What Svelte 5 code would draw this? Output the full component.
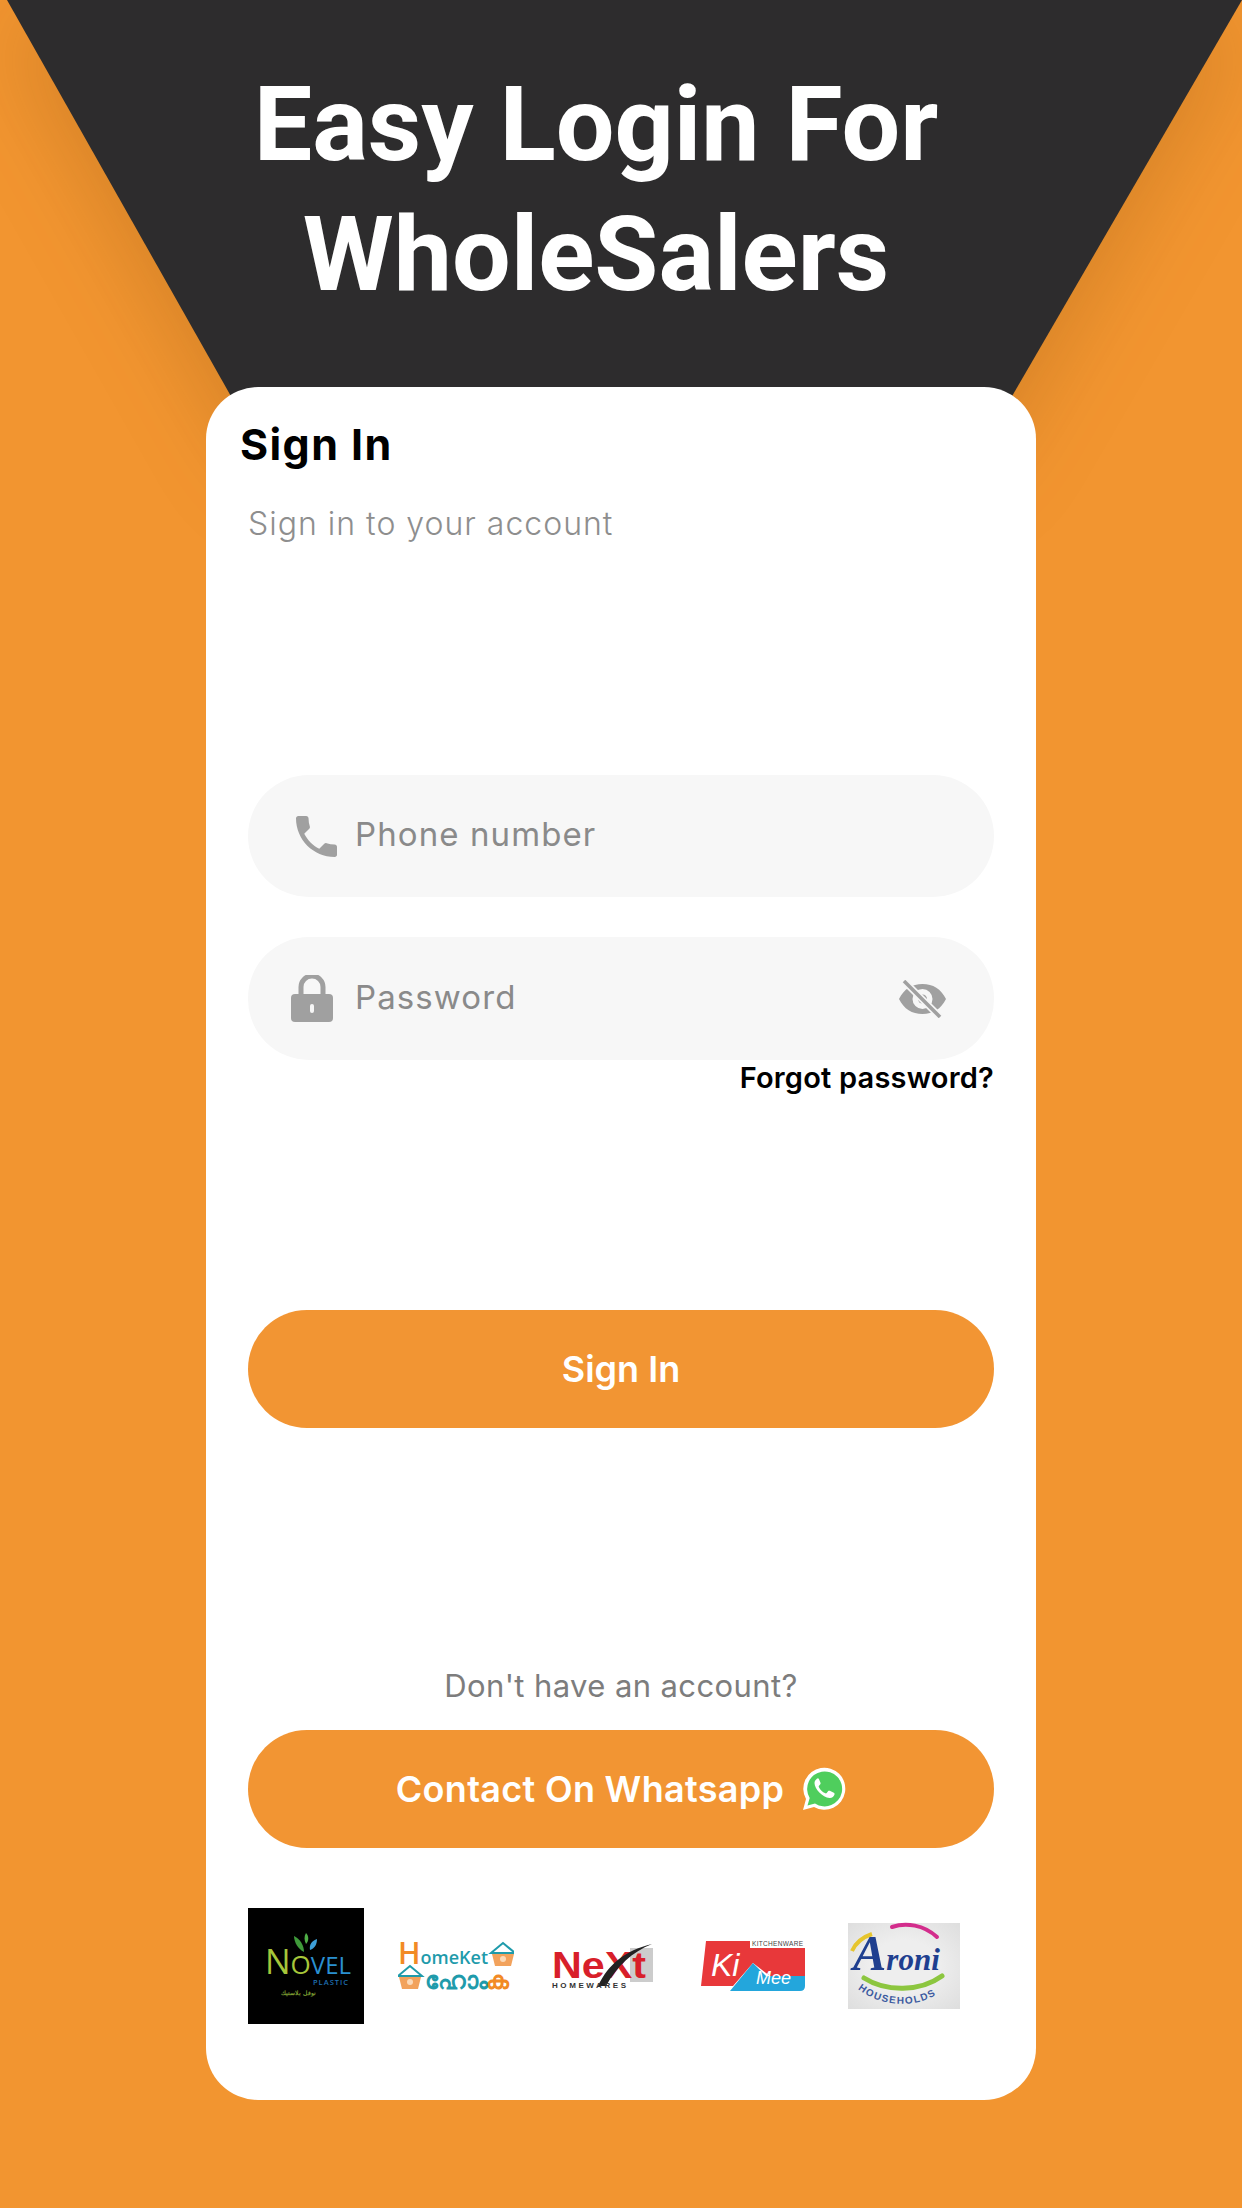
<script>
    let brands = ['novel', 'homeket', 'next', 'kimee', 'aroni']
</script>

<div class="page">
    <div class="banner-shadow"><div class="banner"></div></div>

    <h1>Easy Login For<br>WholeSalers</h1>

    <div class="card">
        <h2>Sign In</h2>
        <p class="sub">Sign in to your account</p>

        <div class="field first">
            <svg class="ico-phone" viewBox="3 3 18 18"><path d="M6.62 10.79c1.44 2.83 3.76 5.14 6.59 6.59l2.2-2.2c.27-.27.67-.36 1.02-.24 1.12.37 2.33.57 3.57.57.55 0 1 .45 1 1V20c0 .55-.45 1-1 1-9.39 0-17-7.61-17-17 0-.55.45-1 1-1h3.5c.55 0 1 .45 1 1 0 1.25.2 2.45.57 3.57.11.35.03.74-.25 1.02l-2.2 2.2z" /></svg>
            <span>Phone number</span>
        </div>

        <div class="field second">
            <svg class="ico-lock" viewBox="0 0 42 47">
                <path d="M4 19h34a4 4 0 0 1 4 4v20a4 4 0 0 1-4 4H4a4 4 0 0 1-4-4V23a4 4 0 0 1 4-4z"/>
                <path d="M10 20v-8a11 11 0 0 1 22 0v8" fill="none" stroke="#a0a0a0" stroke-width="5"/>
                <rect x="19" y="29" width="4" height="9" rx="2" fill="#f6f6f6"/>
            </svg>
            <span>Password</span>
            <svg class="ico-eye" viewBox="0 0 47 38">
                <path fill-rule="evenodd" d="M0 19C5 9 13 4 23.500 4S42 9 47 19c-5 10-13 15-23.500 15S5 29 0 19zm23.500-10a10 10 0 1 0 0 20 10 10 0 0 0 0-20z"/>
                <circle cx="23.500" cy="19" r="4.500"/>
                <path d="M5 1l36 36" stroke="#f6f6f6" stroke-width="7"/>
                <path d="M5 1l36 36" stroke="#a0a0a0" stroke-width="3.500"/>
            </svg>
        </div>
        <div class="forgot">Forgot password?</div>

        <button class="btn signin">Sign In</button>

        <p class="noacc">Don't have an account?</p>

        <button class="btn contact">
            Contact On Whatsapp
            <svg class="ico-wa" viewBox="0 0 44 44">
                <path d="M1 43l3-11A21 21 0 1 1 12 40z" fill="#fff"/>
                <path d="M5.500 38.500l2.200-7.500A17.500 17.500 0 1 1 13 36.500z" fill="#4fce5d"/>
                <path d="M15.500 11.500c-1.500.5-3 2.500-3 4.500 0 6 8 14.500 15 15 2.500.2 4.500-1.500 5-3.500.2-.8 0-1.300-.7-1.700l-4-2c-.7-.3-1.200-.2-1.600.3l-1.500 1.900c-.4.400-.8.500-1.300.3-3-1.300-5.200-3.500-6.600-6.300-.2-.5-.1-.9.200-1.200l1.300-1.500c.4-.5.400-.9.200-1.500l-1.600-3.800c-.3-.8-1.300-.8-1.400-.5z" fill="#fff"/>
            </svg>
        </button>

        <div class="logos">
            {#each brands as b}
                <div class="logo {b}">
                    {#if b === 'novel'}
                        <svg viewBox="0 0 116 116">
                            <rect width="116" height="116" fill="#000"/>
                            <path d="M56 44c-6-3-10-10-10-16 6 3 10 9 10 16z" fill="#3f9a3a"/>
                            <path d="M58 36c-2-4-2-8 0-11 3 3 3 8 0 11z" fill="#4fae47"/>
                            <path d="M62 42c-1-6 2-9 7-11 0 5-2 9-7 11z" fill="#3d9fd8"/>
                            <text x="17" y="66" class="nv thin" fill="#a6c63a" font-size="34">N<tspan font-size="26">O</tspan><tspan font-size="24" fill="#2a90d0">VEL</tspan></text>
                            <text x="65" y="77" class="nv" font-size="7.500" letter-spacing="1" fill="#1f6fb0">PLASTIC</text>
                            <text x="33" y="87" class="nv" font-size="6" fill="#7a9a30">نوفل بلاستيك</text>
                        </svg>
                    {:else if b === 'homeket'}
                        <svg viewBox="0 0 116 116">
                            <text x="0" y="56" class="hk" font-size="30" fill="#f28a25">H<tspan font-size="18" fill="#1f9bab">omeKet</tspan></text>
                            <g transform="translate(93 35)">
                                <path d="M12 0L0 10h24z" fill="#fff" stroke="#1f9bab" stroke-width="2"/>
                                <path d="M1 11h22l-3 12H4z" fill="#f2a25c"/>
                                <circle cx="12" cy="16" r="3" fill="#fbd9b8"/>
                            </g>
                            <g transform="translate(0 58)">
                                <path d="M12 0L0 10h24z" fill="#fff" stroke="#1f9bab" stroke-width="2"/>
                                <path d="M1 11h22l-3 12H4z" fill="#f2a25c"/>
                                <circle cx="12" cy="16" r="3" fill="#fbd9b8"/>
                            </g>
                            <text x="27" y="81" class="hk" font-size="24" fill="#1f9bab">ഹോം</text>
                            <text x="88" y="81" class="hk" font-size="24" fill="#f28a25">ക</text>
                        </svg>
                    {:else if b === 'next'}
                        <svg viewBox="0 0 116 116">
                            <rect x="82" y="40" width="23" height="34" fill="#ccc"/>
                            <text x="4" y="70" class="nx" font-size="36" textLength="94" lengthAdjust="spacingAndGlyphs" fill="#d81f2a">NeXt</text>
                            <path d="M50 78c10-22 28-36 54-42-20 8-35 22-46 42z" fill="#222"/>
                            <text x="4" y="80" class="nx" font-size="8" textLength="74" fill="#333">HOMEWARES</text>
                        </svg>
                    {:else if b === 'kimee'}
                        <svg viewBox="0 0 116 116">
                            <path d="M8 33H52V40H107V68H72L55 55 35 78H3Z" fill="#e8383a"/>
                            <path d="M32 83 55 55 68 68 107 68V78Q107 83 102 83Z" fill="#23a6dc"/>
                            <text x="54" y="38" class="km" font-size="6.500" textLength="51" fill="#444">KITCHENWARE</text>
                            <text x="13" y="68" class="km ital" font-size="32" fill="#fff">Ki</text>
                            <text x="58" y="76" class="km ital" font-size="18" fill="#fff">Mee</text>
                        </svg>
                    {:else}
                        <svg viewBox="0 0 116 116">
                            <defs>
                                <radialGradient id="aroni-bg" cx=".5" cy=".5" r=".75">
                                    <stop offset=".4" stop-color="#eeeeee"/>
                                    <stop offset="1" stop-color="#dcdcdc"/>
                                </radialGradient>
                            </defs>
                            <rect x="0" y="15" width="112" height="86" fill="url(#aroni-bg)"/>
                            <path d="M4 43c4-9 11-14 20-17" stroke="#e6c52e" stroke-width="4" fill="none"/>
                            <path d="M44 19c14-5 32-2 45 10" stroke="#d32d8c" stroke-width="4" fill="none" stroke-linecap="round"/>
                            <path d="M16 70c22 14 56 14 78-2" stroke="#8cc63f" stroke-width="5" fill="none" stroke-linecap="round"/>
                            <text x="5" y="62" class="ar" font-size="50" fill="#1f3f8f">A<tspan font-size="31">roni</tspan></text>
                            <path id="arc-aroni" d="M10 81c24 20 70 22 92-7" fill="none"/>
                            <text class="hh" font-size="10" letter-spacing="1.300" fill="#3c5aa0"><textPath href="#arc-aroni">HOUSEHOLDS</textPath></text>
                        </svg>
                    {/if}
                </div>
            {/each}
        </div>
    </div>
</div>

<style>
    :global(body){
        margin: 0;
        background: #f29530;
    }
    .page{
        position: relative;
        width: 1242px;
        height: 2208px;
        overflow: hidden;
        background: #f29530;
        font-family: "Inter", "Open Sans", sans-serif;
    }
    /* dark wedge behind the title */
    .banner-shadow{
        position: absolute;
        top: 0;
        left: 0;
        width: 1242px;
        height: 460px;
        filter: drop-shadow(0 20px 45px rgba(90,50,0,.2));
    }
    .banner{
        width: 100%;
        height: 100%;
        background: #2d2c2d;
        clip-path: polygon(7px 0, 1242px 0, 975px 460px, 267px 460px);
    }
    h1{
        position: relative;
        margin: 0;
        padding: 60px 50px 0 0;
        height: 387px;
        box-sizing: border-box;
        text-align: center;
        color: #fff;
        font-family: "Roboto", sans-serif;
        font-weight: 700;
        font-size: 104px;
        line-height: 130px;
    }
    .card{
        position: relative;
        box-sizing: border-box;
        width: 830px;
        height: 1713px;
        margin-left: 206px;
        padding: 0 42px;
        background: #fff;
        border-radius: 52px;
    }
    h2{
        margin: 0 0 0 -8px;
        padding-top: 32px;
        font-size: 43px;
        line-height: 50px;
        font-weight: 700;
        letter-spacing: 1.400px;
        color: #000;
    }
    .sub{
        margin: 0;
        padding-top: 35px;
        font-size: 32px;
        line-height: 40px;
        font-weight: 300;
        letter-spacing: 1px;
        color: #8e8e8e;
    }
    .field{
        display: flex;
        align-items: center;
        box-sizing: border-box;
        height: 122px;
        border-radius: 61px;
        background: #f7f7f7;
        color: #8a8a8a;
        font-size: 33px;
        letter-spacing: 1.100px;
        fill: #a0a0a0;
    }
    .field span{
        position: relative;
        top: -2px;
    }
    .first{
        margin-top: 231px;
        padding-left: 48px;
    }
    .second{
        margin-top: 40px;
        padding-left: 43px;
        height: 123px;
    }
    .ico-phone{
        width: 41px;
        height: 41px;
        margin-right: 18px;
    }
    .ico-lock{
        width: 42px;
        height: 47px;
        margin-right: 22px;
    }
    .ico-eye{
        width: 47px;
        height: 38px;
        margin-left: auto;
        margin-right: 48px;
    }
    .forgot{
        text-align: right;
        font-size: 29px;
        line-height: 36px;
        font-weight: 600;
        letter-spacing: .2px;
        color: #000;
    }
    .btn{
        display: flex;
        align-items: center;
        justify-content: center;
        width: 100%;
        height: 118px;
        padding: 0;
        border: 0;
        border-radius: 59px;
        background: #f29533;
        color: #fff;
        font-family: inherit;
        font-weight: 600;
        font-size: 36px;
    }
    .signin{
        margin-top: 214px;
    }
    .noacc{
        margin: 240px 0 0;
        text-align: center;
        font-size: 31px;
        line-height: 36px;
        letter-spacing: .4px;
        color: #7d7d7d;
    }
    .contact{
        margin-top: 26px;
        font-size: 36px;
        letter-spacing: .3px;
    }
    .ico-wa{
        width: 44px;
        height: 44px;
        margin-left: 18px;
    }
    .logos{
        display: flex;
        gap: 34px;
        margin-top: 60px;
    }
    .logo{
        width: 116px;
        height: 116px;
        flex: none;
    }
    .logo svg{
        display: block;
        width: 116px;
        height: 116px;
    }
    .nv, .hk{
        font-family: "Open Sans", sans-serif;
        font-weight: 600;
    }
    .nv.thin{
        font-weight: 400;
    }
    .nx{
        font-family: "Liberation Sans", sans-serif;
        font-weight: 700;
    }
    .km{
        font-family: "Liberation Sans", sans-serif;
    }
    .ital{
        font-style: italic;
    }
    .ar{
        font-family: "Liberation Serif", serif;
        font-style: italic;
        font-weight: 700;
    }
    .hh{
        font-family: "Liberation Sans", sans-serif;
        font-weight: 700;
    }
</style>
